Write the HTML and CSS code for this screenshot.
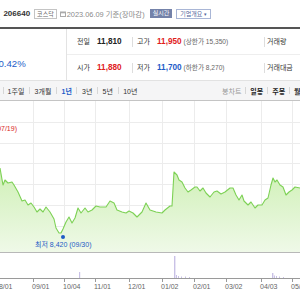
FILE: index.html
```html
<!DOCTYPE html>
<html lang="ko">
<head>
  <meta charset="UTF-8" />
  <meta name="viewport" content="width=device-width, initial-scale=1.0"/>
  <title>바디텍메드 - 차트</title>
  <link rel="stylesheet" href="styles.css">
</head>
<body>

  <!-- 종목 헤더 -->
  <div class="top">
    <h2 class="name">바디텍메드</h2>
    <span class="code">206640</span>
    <span class="market">코스닥</span>
    <svg class="cal" width="6" height="6" viewBox="0 0 6 6">
      <rect x="0.5" y="1" width="5" height="4.5" fill="none" stroke="#aaa" stroke-width="1"/>
      <rect x="0.5" y="1" width="5" height="1.3" fill="#aaa"/>
    </svg>
    <span class="date">2023.06.09 기준(장마감)</span>
    <span class="realtime">실시간</span>
    <span class="corp">기업개요 <em>▾</em></span>
  </div>

  <!-- 시세 요약 -->
  <div class="summary">
    <div class="now">
      <span class="rate">▼50 -0.42%</span>
    </div>
    <div class="rows">
      <div class="row">
        <div class="cell first"><span class="lbl">전일</span><b>11,810</b></div>
        <div class="cell mid"><span class="lbl">고가</span><b class="up">11,950</b><span class="sub">(상한가 15,350)</span></div>
        <div class="cell last"><span class="lbl">거래량</span></div>
      </div>
      <div class="row">
        <div class="cell first"><span class="lbl">시가</span><b class="up">11,880</b></div>
        <div class="cell mid"><span class="lbl">저가</span><b class="down">11,700</b><span class="sub">(하한가 8,270)</span></div>
        <div class="cell last"><span class="lbl">거래대금</span></div>
      </div>
    </div>
  </div>

  <!-- 기간 탭 -->
  <div class="tabs">
    <div class="period">
      <i class="sep"></i><a>1주일</a>
      <i class="sep"></i><a>3개월</a>
      <i class="sep"></i><a class="on">1년</a>
      <i class="sep"></i><a>3년</a>
      <i class="sep"></i><a>5년</a>
      <i class="sep"></i><a>10년</a>
    </div>
    <div class="candle">
      <span class="title">봉차트</span>
      <i class="sep"></i><a>일봉</a>
      <i class="sep"></i><a>주봉</a>
      <i class="sep"></i><a>월봉</a>
    </div>
  </div>

  <!-- 차트 -->
  <div class="chart">
    <svg width="300" height="199" viewBox="0 0 300 199">
      <defs>
        <linearGradient id="area" x1="0" y1="0" x2="0" y2="1">
          <stop offset="0" stop-color="#cff0b6"/>
          <stop offset="1" stop-color="#eff9e8"/>
        </linearGradient>
      </defs>
      <g transform="translate(0,-101)">
        <g stroke="#ececec" stroke-width="1">
          <line x1="0" y1="122.5" x2="300" y2="122.5"/>
          <line x1="0" y1="143.5" x2="300" y2="143.5"/>
          <line x1="0" y1="163.5" x2="300" y2="163.5"/>
          <line x1="0" y1="184.5" x2="300" y2="184.5"/>
          <line x1="0" y1="205.5" x2="300" y2="205.5"/>
          <line x1="0" y1="226.5" x2="300" y2="226.5"/>
          <line x1="33.5" y1="101" x2="33.5" y2="252"/>
          <line x1="64.5" y1="101" x2="64.5" y2="252"/>
          <line x1="95.5" y1="101" x2="95.5" y2="252"/>
          <line x1="129.5" y1="101" x2="129.5" y2="252"/>
          <line x1="162.5" y1="101" x2="162.5" y2="252"/>
          <line x1="194.5" y1="101" x2="194.5" y2="252"/>
          <line x1="226.5" y1="101" x2="226.5" y2="252"/>
          <line x1="261.5" y1="101" x2="261.5" y2="252"/>
          <line x1="292.5" y1="101" x2="292.5" y2="252"/>
        </g>

        <path fill="url(#area)" stroke="none" d="M0,168 L3,185 L5,180 L8,183 L12,182 L14,185 L18,192 L22,201 L25,200 L28,205 L31,203 L34,207 L37,212 L40,209 L43,212 L46,207 L50,212 L54,219 L56,228 L59,233 L61,233 L63,229 L66,222 L69,217 L72,223 L75,218 L78,208 L81,213 L85,208 L88,212 L92,210 L96,206 L100,207 L106,207 L110,201 L114,203 L117,210 L122,212 L126,213 L129,211 L133,213 L137,217 L142,212 L146,203 L150,210 L156,212 L162,213 L165,210 L170,206 L172,206 L174,172 L177,175 L179,180 L182,182 L185,188 L188,192 L191,190 L195,187 L197,187 L200,191 L203,188 L206,193 L210,197 L214,192 L217,191 L221,194 L225,192 L230,188 L233,188 L236,195 L239,200 L242,195 L244,201 L248,205 L251,202 L255,208 L258,205 L262,205 L265,200 L268,198 L271,185 L273,178 L275,182 L277,180 L280,185 L283,187 L286,195 L289,192 L292,190 L295,187 L300,188 L300,252 L0,252 Z"/>
        <path fill="none" stroke="#7dd155" stroke-width="1.1" stroke-linejoin="round" d="M0,168 L3,185 L5,180 L8,183 L12,182 L14,185 L18,192 L22,201 L25,200 L28,205 L31,203 L34,207 L37,212 L40,209 L43,212 L46,207 L50,212 L54,219 L56,228 L59,233 L61,233 L63,229 L66,222 L69,217 L72,223 L75,218 L78,208 L81,213 L85,208 L88,212 L92,210 L96,206 L100,207 L106,207 L110,201 L114,203 L117,210 L122,212 L126,213 L129,211 L133,213 L137,217 L142,212 L146,203 L150,210 L156,212 L162,213 L165,210 L170,206 L172,206 L174,172 L177,175 L179,180 L182,182 L185,188 L188,192 L191,190 L195,187 L197,187 L200,191 L203,188 L206,193 L210,197 L214,192 L217,191 L221,194 L225,192 L230,188 L233,188 L236,195 L239,200 L242,195 L244,201 L248,205 L251,202 L255,208 L258,205 L262,205 L265,200 L268,198 L271,185 L273,178 L275,182 L277,180 L280,185 L283,187 L286,195 L289,192 L292,190 L295,187 L300,188"/>

        <text x="17" y="131" class="hi" text-anchor="end">(07/19)</text>
        <circle cx="63" cy="237" r="2" fill="#1e5bc6"/>
        <text x="35" y="246.5" class="lo">최저 8,420 (09/30)</text>

        <line x1="0" y1="252.5" x2="300" y2="252.5" stroke="#b8b8b8"/>

        <g fill="#c9c1e6">
          <rect x="79" y="272" width="1.2" height="6"/>
          <rect x="174" y="256" width="1.4" height="22"/>
          <rect x="176" y="275" width="1" height="3"/>
          <rect x="178" y="276" width="1" height="2"/>
          <rect x="181" y="276.5" width="1" height="1.5"/>
          <rect x="185" y="276.5" width="1" height="1.5"/>
          <rect x="189" y="277" width="1" height="1"/>
          <rect x="272" y="273" width="1.4" height="5"/>
          <rect x="274" y="275.5" width="1" height="2.5"/>
          <rect x="276" y="276" width="1" height="2"/>
          <rect x="279" y="276.5" width="1" height="1.5"/>
          <rect x="283" y="277" width="1" height="1"/>
        </g>

        <line x1="0" y1="278.5" x2="300" y2="278.5" stroke="#9a9a9a"/>
        <g stroke="#9a9a9a">
          <line x1="33.5" y1="278" x2="33.5" y2="282"/>
          <line x1="64.5" y1="278" x2="64.5" y2="282"/>
          <line x1="95.5" y1="278" x2="95.5" y2="282"/>
          <line x1="129.5" y1="278" x2="129.5" y2="282"/>
          <line x1="162.5" y1="278" x2="162.5" y2="282"/>
          <line x1="194.5" y1="278" x2="194.5" y2="282"/>
          <line x1="226.5" y1="278" x2="226.5" y2="282"/>
          <line x1="261.5" y1="278" x2="261.5" y2="282"/>
          <line x1="292.5" y1="278" x2="292.5" y2="282"/>
        </g>
        <g class="axis">
          <text x="-5" y="288.5">08/01</text>
          <text x="32" y="288.5">09/01</text>
          <text x="63" y="288.5">10/04</text>
          <text x="94" y="288.5">11/01</text>
          <text x="128" y="288.5">12/01</text>
          <text x="161" y="288.5">01/02</text>
          <text x="193" y="288.5">02/01</text>
          <text x="225" y="288.5">03/02</text>
          <text x="260" y="288.5">04/03</text>
          <text x="291" y="288.5">05/02</text>
        </g>
      </g>
    </svg>
  </div>

</body>
</html>
```

FILE: styles.css
```css
body {
  margin: 0;
  width: 300px;
  height: 300px;
  overflow: hidden;
  background: #fff;
  font-family: 'Liberation Sans', 'Noto Sans CJK KR', sans-serif;
  color: #333;
}

/* header */
.top {
  display: flex;
  align-items: center;
  height: 27px;
  border-bottom: 2px solid #555;
  white-space: nowrap;
}

.name {
  flex: none;
  margin: 0 0 0 -64px;
  font-size: 14px;
  font-weight: normal;
  color: #222;
  font-family: 'Noto Sans CJK KR', sans-serif;
}

.code {
  margin-left: 3px;
  font-size: 8px;
  font-weight: bold;
  color: #333;
}

.market {
  margin-left: 4px;
  padding: 0 2px;
  height: 8px;
  line-height: 8px;
  font-size: 6px;
  color: #666;
  border: 1px solid #c4c4c4;
}

.cal {
  margin-left: 3px;
}

.date {
  margin-left: 1px;
  font-size: 7.4px;
  color: #8a8a8a;
}

.realtime {
  margin-left: 5px;
  padding: 0 3px;
  height: 9px;
  line-height: 9px;
  font-size: 6px;
  color: #fff;
  background: #7482a9;
}

.corp {
  margin-left: 4px;
  padding: 0 3px;
  height: 8px;
  line-height: 8px;
  font-size: 6px;
  color: #52669c;
  border: 1px solid #a9b6d6;
}

.corp em {
  font-style: normal;
  font-size: 5px;
}

/* summary */
.summary {
  display: flex;
  height: 51px;
}

.now {
  width: 67px;
  border-right: 1px solid #e3e3e3;
  display: flex;
  align-items: flex-end;
  padding-bottom: 11px;
  box-sizing: border-box;
  overflow: hidden;
}

.rate {
  margin-left: -27.5px;
  font-size: 9.6px;
  color: #1d5bc8;
  white-space: nowrap;
}

.rows {
  flex: 1;
  display: flex;
  flex-direction: column;
}

.row {
  flex: 1;
  display: flex;
  align-items: center;
  font-size: 7px;
  white-space: nowrap;
}

.row + .row {
  border-top: 1px solid #eee;
}

.cell {
  display: flex;
  align-items: center;
}

.cell.first {
  width: 65px;
  padding-left: 10px;
  box-sizing: border-box;
}

.cell.mid,
.cell.last {
  border-left: 1px solid #ddd;
  line-height: 6px;
  padding-left: 4px;
}

.cell.mid {
  width: 132px;
  box-sizing: border-box;
}

.cell.last {
  padding-left: 2px;
}

.lbl {
  width: 20px;
  color: #333;
  line-height: 10px;
}

.cell b {
  font-size: 8.2px;
  line-height: 10px;
  color: #222;
}

.cell b.up { color: #e0201c; }
.cell b.down { color: #1d5bc8; }

.sub {
  margin-left: 2px;
  font-size: 6.6px;
  line-height: 10px;
  color: #666;
}

/* tabs */
.tabs {
  display: flex;
  justify-content: space-between;
  align-items: center;
  height: 19px;
  background: #f5f5f6;
  border-top: 1px solid #e2e2e2;
  border-bottom: 1px solid #c4c4c4;
  font-size: 7px;
  white-space: nowrap;
}

.period,
.candle {
  display: flex;
  align-items: center;
}

.period .sep {
  margin: 0 4.6px;
}

.period .sep:first-child {
  margin-left: 3px;
  margin-right: 3.6px;
}

.candle {
  margin-right: -7px;
}

.sep {
  display: inline-block;
  width: 1px;
  height: 7px;
  background: #d6d6d6;
  margin: 0 4px;
}

.tabs a {
  color: #333;
}

.tabs a.on {
  color: #1d5bc8;
  font-weight: bold;
}

.candle a {
  font-weight: bold;
  color: #222;
}

.candle .title {
  color: #999;
}

/* chart */
.chart svg {
  display: block;
}

.chart text {
  font-family: 'Liberation Sans', 'Noto Sans CJK KR', sans-serif;
  font-size: 7px;
}

.chart .hi {
  fill: #d9261c;
}

.chart .lo {
  fill: #1e5bc6;
}

.chart .axis text {
  fill: #666;
}
```
